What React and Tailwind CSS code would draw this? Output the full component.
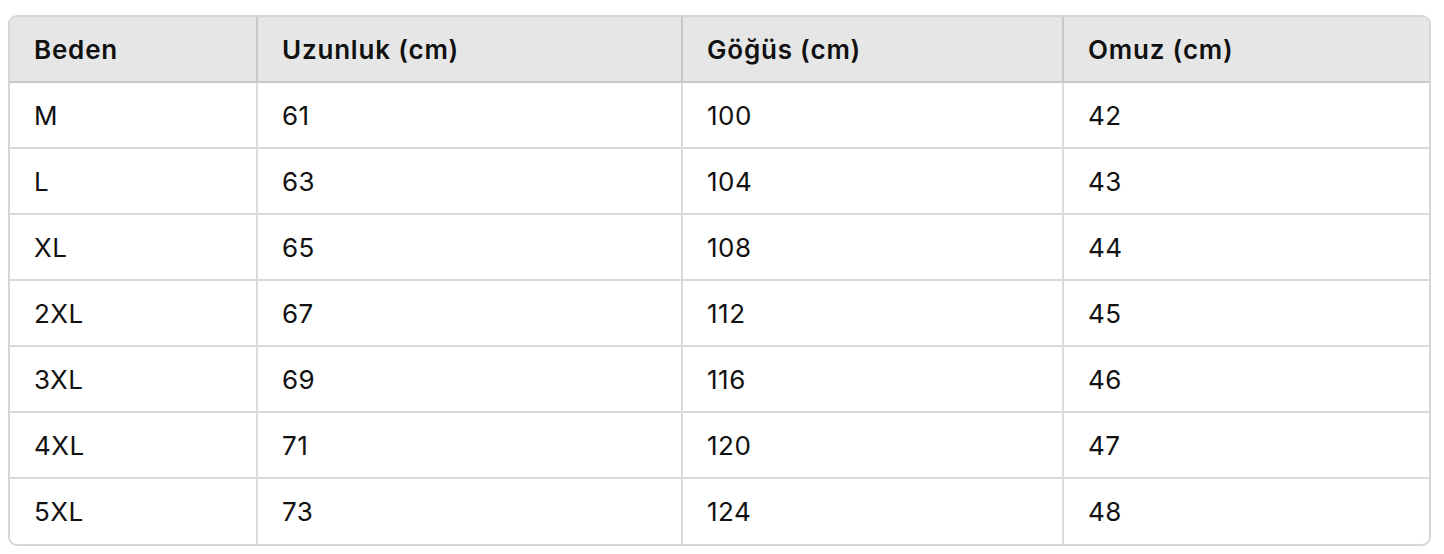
const rows = [
  ['M', '61', '100', '42'],
  ['L', '63', '104', '43'],
  ['XL', '65', '108', '44'],
  ['2XL', '67', '112', '45'],
  ['3XL', '69', '116', '46'],
  ['4XL', '71', '120', '47'],
  ['5XL', '73', '124', '48'],
];

const headers = ['Beden', 'Uzunluk (cm)', 'Göğüs (cm)', 'Omuz (cm)'];
const widths = ['w-[247px]', 'w-[425px]', 'w-[381px]', 'w-[366px]'];

export default function App() {
  return (
    <div className="min-h-[554px] bg-white pl-2 pt-[15px] font-['Inter','Liberation_Sans',sans-serif] text-[#111]">
      <div className="w-[1423px] overflow-hidden rounded-[9px] border-2 border-[#d6d6d6]">
        <table className="w-full table-fixed border-collapse">
          <colgroup>
            {widths.map((w, i) => (
              <col key={i} className={w} />
            ))}
          </colgroup>
          <thead>
            <tr className="h-[65px] bg-[#e6e6e6]">
              {headers.map((h, i) => (
                <th
                  key={h}
                  className={`border-b-2 border-[#c8c8c8] px-[24px] text-left text-[26px] font-semibold tracking-[0.8px] ${i > 0 ? 'border-l-2' : ''}`}
                >
                  {h}
                </th>
              ))}
            </tr>
          </thead>
          <tbody>
            {rows.map((r, ri) => (
              <tr key={ri} className="h-[66px]">
                {r.map((c, i) => (
                  <td
                    key={i}
                    className={`border-[#dadada] px-[24px] text-[26px] font-normal tracking-[0.5px] ${i > 0 ? 'border-l-2' : ''} ${ri < rows.length - 1 ? 'border-b-2' : ''}`}
                  >
                    {c}
                  </td>
                ))}
              </tr>
            ))}
          </tbody>
        </table>
      </div>
    </div>
  );
}
